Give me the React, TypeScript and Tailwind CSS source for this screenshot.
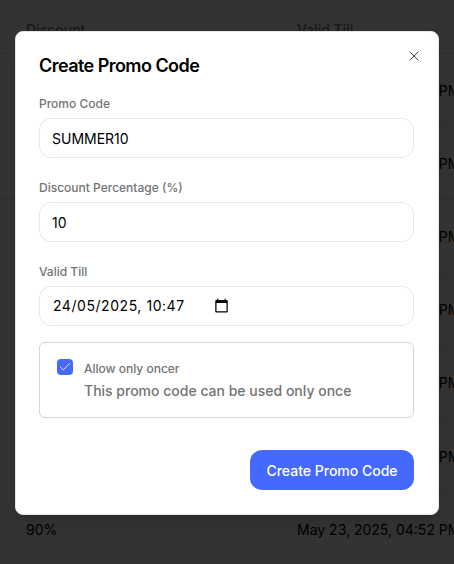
import React from "react";
import { X, Check } from "lucide-react";

const rows = ["10%", "20%", "30%", "40%", "50%", "60%", "90%"];

export default function App() {
  return (
    <div className="relative h-[564px] w-[454px] overflow-hidden bg-white text-[14px] text-black font-['Inter',sans-serif]">
      <div className="w-[600px]">
        <div className="flex h-[54px] items-center border-b border-[#e5e7eb] pt-[6px] text-[#737373]">
          <div className="w-[297px] pl-[26px] font-medium">Discount</div>
          <div className="font-medium">Valid Till</div>
        </div>
        {rows.map((r) => (
          <div key={r} className="flex h-[73.2px] items-center border-b border-[#e5e7eb]">
            <div className="w-[297px] pl-[26px]">{r}</div>
            <div>May 23, 2025, 04:52 PM</div>
          </div>
        ))}
      </div>

      <div className="absolute inset-0 flex items-start justify-center bg-black/80 pt-[31px]">
        <div className="relative flex h-[484px] w-[424px] flex-col rounded-lg border border-[#e5e5e5] bg-white pl-[23px] pr-[24px] pt-[24px] shadow-lg">
          <button className="absolute right-[16px] top-[16px] text-[#404040]">
            <X size={16} strokeWidth={1.5} />
          </button>
          <h2 className="mt-[1px] text-[18px] font-semibold leading-[18px] tracking-[-0.55px]">Create Promo Code</h2>

          <label className="mt-[21px] text-[12px] font-medium leading-[16px] text-[#737373]">Promo Code</label>
          <input
            readOnly
            value="SUMMER10"
            className="mt-[6px] h-[40px] w-full rounded-xl border border-[#e5e7eb] px-[12px] text-[14px] outline-none"
          />

          <label className="mt-[22px] text-[12px] font-medium leading-[16px] text-[#737373]">Discount Percentage (%)</label>
          <input
            readOnly
            value="10"
            className="mt-[6px] h-[40px] w-full rounded-xl border border-[#e5e7eb] px-[12px] text-[14px] outline-none"
          />

          <label className="mt-[22px] text-[12px] font-medium leading-[16px] text-[#737373]">Valid Till</label>
          <div className="mt-[6px] flex h-[40px] w-full items-center rounded-xl border border-[#e5e7eb] pb-[1px] pl-[13px] text-[14px]">
            <span className="tracking-[0.55px]">24/05/2025, 10:47</span>
            <svg className="ml-[29px]" width="15" height="15" viewBox="0 0 24 24" fill="currentColor">
              <path d="M20 3h-1V1h-2v2H7V1H5v2H4c-1.1 0-2 .9-2 2v16c0 1.1.9 2 2 2h16c1.1 0 2-.9 2-2V5c0-1.1-.9-2-2-2zm0 18H4V8h16v13z" />
            </svg>
          </div>

          <div className="mt-[16px] flex h-[76px] gap-[11px] rounded-md border border-[#d4d4d4] pl-[17px] pr-[16px] pt-[16px]">
            <div className="flex h-[16px] w-[16px] items-center justify-center rounded-[4px] bg-[#4569ff] text-white">
              <Check size={14} strokeWidth={1.5} />
            </div>
            <div className="pt-[1px]">
              <div className="text-[12px] font-medium leading-[18px] text-[#737373]">Allow only oncer</div>
              <div className="mt-[3px] text-[14px] font-medium leading-[20px] text-[#737373]">This promo code can be used only once</div>
            </div>
          </div>

          <div className="mt-[32px] flex justify-end">
            <button className="h-[40px] w-[164px] rounded-xl bg-[#4569ff] text-[14px] font-medium text-white">Create Promo Code</button>
          </div>
        </div>
      </div>
    </div>
  );
}
